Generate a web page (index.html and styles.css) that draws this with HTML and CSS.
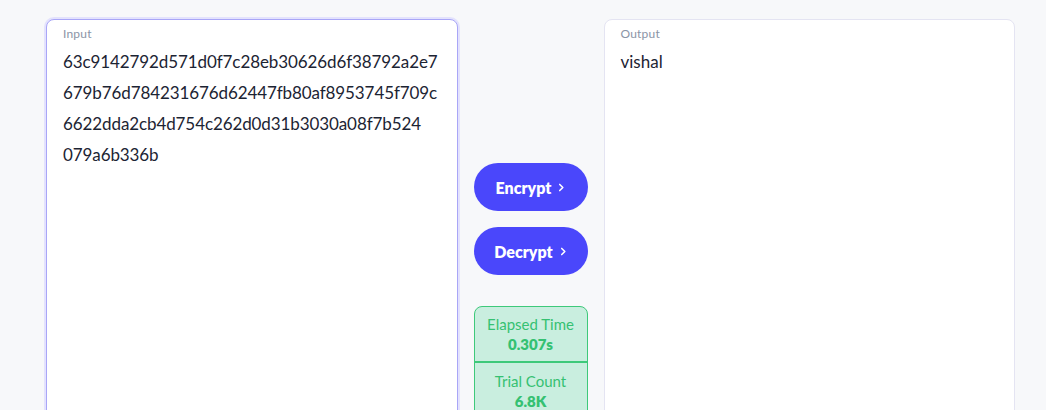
FILE: index.html
```html
<!DOCTYPE html>
<html>
<head>
<meta charset="utf-8">
<link rel="stylesheet" href="styles.css">
</head>
<body>
<div class="page">
  <div class="card card-focus">
    <div class="label">Input</div>
    <div class="content hash">63c9142792d571d0f7c28eb30626d6f38792a2e7
679b76d784231676d62447fb80af8953745f709c
6622dda2cb4d754c262d0d31b3030a08f7b524
079a6b336b</div>
  </div>
  <div class="middle">
    <button class="btn">Encrypt <svg class="chev" viewBox="0 0 8 10" width="7" height="9"><path d="M2 1.5 L5.5 5 L2 8.5" fill="none" stroke="#fff" stroke-width="1.8" stroke-linecap="round" stroke-linejoin="round"/></svg></button>
    <button class="btn">Decrypt <svg class="chev" viewBox="0 0 8 10" width="7" height="9"><path d="M2 1.5 L5.5 5 L2 8.5" fill="none" stroke="#fff" stroke-width="1.8" stroke-linecap="round" stroke-linejoin="round"/></svg></button>
    <div class="stats">
      <div class="stat">
        <div class="stat-name">Elapsed Time</div>
        <div class="stat-val">0.307s</div>
      </div>
      <div class="stat">
        <div class="stat-name">Trial Count</div>
        <div class="stat-val">6.8K</div>
      </div>
    </div>
  </div>
  <div class="card">
    <div class="label">Output</div>
    <div class="content">vishal</div>
  </div>
</div>
</body>
</html>
```

FILE: styles.css
```css
html, body {
  margin: 0;
  padding: 0;
  background: #f7f8fa;
  font-family: Lato, "Noto Sans", sans-serif;
  overflow: hidden;
}
.page {
  display: grid;
  grid-template-columns: minmax(0, 1fr) 114px minmax(0, 1fr);
  column-gap: 16px;
  padding: 19px 31px 0 46px;
  height: 460px;
}
.card {
  background: #fff;
  border: 1px solid #e4e4f2;
  border-radius: 8px;
  padding: 7px 16px;
  height: 430px;
  box-sizing: border-box;
  min-width: 0;
}
.card-focus {
  border-color: #a9a6f7;
  box-shadow: 0 0 0 2px #e3e2fd;
}
.label {
  font-size: 12px;
  color: #8a94a6;
  line-height: 14px;
  letter-spacing: 0.2px;
}
.content {
  margin-top: 5px;
  font-size: 17px;
  line-height: 31px;
  color: #1c2433;
  white-space: pre-line;
}
.hash {
  letter-spacing: -0.1px;
}
.middle {
  display: flex;
  flex-direction: column;
  padding-top: 144px;
  gap: 16px;
}
.btn {
  height: 48px;
  border: none;
  border-radius: 24px;
  background: #4a47fb;
  color: #fff;
  font-family: Lato, "Noto Sans", sans-serif;
  font-weight: 800;
  font-size: 16px;
  display: flex;
  align-items: center;
  justify-content: center;
  gap: 7px;
  padding: 0;
}
.chev { display: block; }
.stats {
  margin-top: 15px;
  border: 1.5px solid #3ec97a;
  border-radius: 8px;
  background: #c9eedf;
  color: #35c172;
  overflow: hidden;
}
.stat {
  height: 54px;
  display: flex;
  flex-direction: column;
  align-items: center;
  justify-content: center;
  text-align: center;
}
.stat + .stat {
  border-top: 2px solid #3ec97a;
  height: 56px;
}
.stat-name {
  font-size: 15px;
  line-height: 20px;
}
.stat-val {
  font-size: 15px;
  font-weight: 800;
  line-height: 20px;
}
```
